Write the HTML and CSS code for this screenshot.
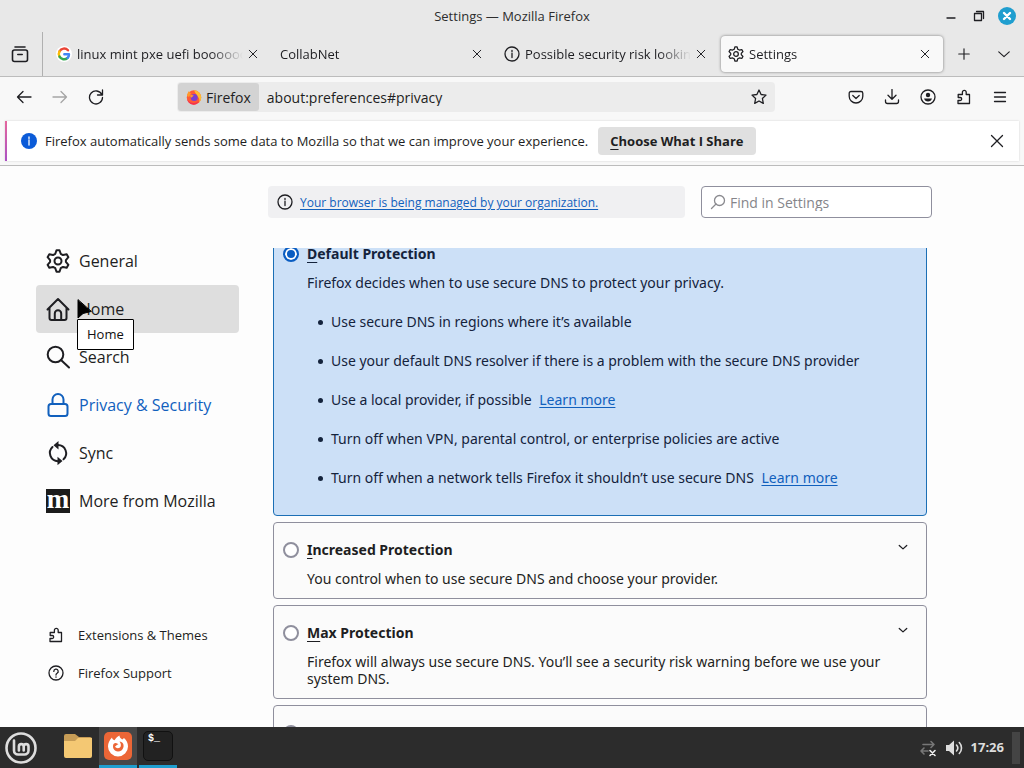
FILE: index.html
```
<!DOCTYPE html>
<html lang="en">
<head>
<meta charset="UTF-8">
<title>Settings</title>
<link rel="stylesheet" href="styles.css">
</head>
<body>
<!-- shared icons -->
<svg width="0" height="0" class="defs" aria-hidden="true">
	<symbol id="i-close" viewBox="0 0 16 16"><path d="M3 3l10 10M13 3L3 13"/></symbol>
	<symbol id="i-info" viewBox="0 0 16 16"><circle cx="8" cy="8" r="7"/><path d="M8 7.2v4.3M8 4.3v1.3"/></symbol>
	<symbol id="i-down" viewBox="0 0 16 16"><path d="M2 5.5l6 5.500 6-5.500"/></symbol>
	<symbol id="i-gear" viewBox="0 0 24 24"><path d="M10.500 1.200h3l1.200 3.600 2.300 1.300 3.700-.8 1.700 2.900-2.500 2.900v1.800l2.500 2.900-1.700 2.900-3.700-.8-2.300 1.300-1.200 3.600h-3l-1.200-3.600L7 17.900l-3.700.8-1.700-2.900 2.500-2.900v-1.800L1.600 8.200l1.700-2.900 3.700.8 2.300-1.300z"/><circle cx="12" cy="12" r="3.500"/></symbol>
	<symbol id="i-puzzle" viewBox="0 0 16 16"><path d="M2 14.500h11.500v-9H10.200V3.200a1.900 1.900 0 0 0-3.800 0v2.300H2.200v3h2a1.400 1.400 0 0 1 0 3H2z"/></symbol>
</svg>

<header class="titlebar">
	<h1>Settings — Mozilla Firefox</h1>
	<div class="winbtns">
		<button aria-label="Minimize"><svg viewBox="0 0 16 16"><path d="M4 10h8"/></svg></button>
		<button aria-label="Restore"><svg viewBox="0 0 16 16"><path d="M3.500 5.500h7v7h-7zM5.500 3.500h7v7"/></svg></button>
		<button aria-label="Close" class="win-close"><svg viewBox="0 0 16 16"><path d="M5 5l6 6M11 5l-6 6"/></svg></button>
	</div>
</header>

<div class="tabstrip">
	<button class="view" aria-label="Firefox View"><svg viewBox="0 0 18 18"><rect x="1.500" y="5" width="15" height="11.500" rx="2"/><path d="M4 2h10M6.800 9.500h4.400"/></svg></button>
	<div class="tabs">
		<div class="tab">
			<svg class="fav" viewBox="0 0 16 16"><circle cx="8" cy="8" r="8" fill="#fff" stroke="none"/><g fill="none" stroke-width="2.400"><path d="M12 4.300A5.200 5.200 0 0 0 3.500 5.400" stroke="#ea4335"/><path d="M3.500 5.400a5.200 5.200 0 0 0 0 5.200" stroke="#fbbc05"/><path d="M3.500 10.600a5.200 5.200 0 0 0 8 1.400" stroke="#34a853"/><path d="M11.500 12A5 5 0 0 0 13 8.200H8.300" stroke="#4285f4"/></g></svg>
			<span class="tab-label">linux mint pxe uefi booooooot</span>
			<button aria-label="Close tab"><svg viewBox="0 0 16 16"><use href="#i-close"/></svg></button>
		</div>
		<div class="tab">
			<span class="tab-label">CollabNet</span>
			<button aria-label="Close tab"><svg viewBox="0 0 16 16"><use href="#i-close"/></svg></button>
		</div>
		<div class="tab">
			<svg class="fav" viewBox="0 0 16 16"><use href="#i-info"/></svg>
			<span class="tab-label">Possible security risk looking up</span>
			<button aria-label="Close tab"><svg viewBox="0 0 16 16"><use href="#i-close"/></svg></button>
		</div>
		<div class="tab active">
			<svg class="fav gear" viewBox="0 0 24 24"><use href="#i-gear"/></svg>
			<span class="tab-label">Settings</span>
			<button aria-label="Close tab"><svg viewBox="0 0 16 16"><use href="#i-close"/></svg></button>
		</div>
	</div>
	<button class="strip-btn" aria-label="New tab"><svg viewBox="0 0 16 16"><path d="M8 2v12M2 8h12"/></svg></button>
	<button class="strip-btn" aria-label="List all tabs"><svg viewBox="0 0 16 16"><use href="#i-down"/></svg></button>
</div>

<div class="navbar">
	<button aria-label="Back"><svg viewBox="0 0 16 16"><path d="M15 8H1.500M7 2.500L1.500 8 7 13.500"/></svg></button>
	<button aria-label="Forward" disabled><svg viewBox="0 0 16 16"><path d="M1 8h13.500M9 2.500L14.500 8 9 13.500"/></svg></button>
	<button aria-label="Reload"><svg viewBox="0 0 16 16"><path d="M13.800 5.500A6.500 6.500 0 1 0 14.500 8.500M14.500 1v5H9.500"/></svg></button>
	<div class="urlbar">
		<button class="identity">
			<svg viewBox="0 0 16 16"><circle cx="8" cy="8.500" r="7.200" fill="#ff5a36"/><path d="M8 1.300c4 .5 7.200 3.200 7.200 7.200 0 2-1 4-2.200 5.200 1-3 0-5.200-1.500-6.200C10.500 5 9 4 8 1.300z" fill="#ffbd2e"/><path d="M1 7c0-2 1-4 2-5 .3 1.300 1 2 2 2.200L3 8z" fill="#ff9a2b"/><circle cx="8.200" cy="8.600" r="3.500" fill="#7a3fd0"/><path d="M4 6.500c1.500-1 3-.5 4 .3-1.500.3-1.500 1.500-3 2z" fill="#ff9a2b"/><path d="M1 10c2 4 8 5.500 12 2-1 3-4 3.800-5.500 3.700C4.500 15.600 1.500 13.500 1 10z" fill="#f5314d"/></svg>
			Firefox
		</button>
		<input type="text" value="about:preferences#privacy" aria-label="Address">
		<button class="star" aria-label="Bookmark this page"><svg viewBox="0 0 16 16"><path d="M8 1l2.100 4.500 4.900.6-3.600 3.400.9 4.900L8 12l-4.300 2.400.9-4.900L1 6.100l4.900-.6z"/></svg></button>
	</div>
	<button aria-label="Save to Pocket"><svg viewBox="0 0 16 16"><path d="M3 2.500h10a1.800 1.800 0 0 1 1.800 1.800v2.900a6.800 6.800 0 0 1-13.600 0V4.300A1.800 1.800 0 0 1 3 2.500zM4.800 6.500L8 9.500l3.200-3"/></svg></button>
	<button aria-label="Downloads"><svg viewBox="0 0 16 16"><path d="M8 .5V10M4 6.300L8 10.300l4-4M1.500 11v1.500a2 2 0 0 0 2 2h9a2 2 0 0 0 2-2V11"/></svg></button>
	<button aria-label="Account"><svg viewBox="0 0 16 16"><circle cx="8" cy="8" r="7"/><circle class="solid" cx="8" cy="6" r="2.200"/><path class="solid" d="M4 9.500h8a4.200 4.200 0 0 1-8 0z"/></svg></button>
	<button aria-label="Extensions"><svg viewBox="0 0 16 16"><use href="#i-puzzle"/></svg></button>
	<button aria-label="Menu"><svg viewBox="0 0 16 16"><path d="M2.500 3.500h11M2.500 8h11M2.500 12.500h11"/></svg></button>
</div>

<div class="notice-wrap">
	<div class="notice">
		<svg class="notice-icon" viewBox="0 0 16 16"><circle cx="8" cy="8" r="8"/><path d="M8 7v5M8 4v1.500"/></svg>
		<span>Firefox automatically sends some data to Mozilla so that we can improve your experience.</span>
		<button class="choose"><u>C</u>hoose What I Share</button>
		<button class="dismiss" aria-label="Dismiss"><svg viewBox="0 0 16 16"><path d="M2.500 2.500l11 11M13.500 2.500l-11 11"/></svg></button>
	</div>
</div>

<div class="prefs">
	<aside class="sidebar">
		<nav class="cats">
			<a href="#general"><svg viewBox="0 0 24 24"><use href="#i-gear"/></svg>General</a>
			<a href="#home" class="hover"><svg viewBox="0 0 24 24"><path d="M1.500 12.500L12 2l10.500 10.500M3.500 10.500V21a2 2 0 0 0 2 2h13a2 2 0 0 0 2-2V10.500M8.800 23v-6.500a3.200 3.200 0 0 1 6.400 0V23"/></svg>Home
				<svg class="cursor" viewBox="0 0 15 20"><path d="M1 1v18l5-4.500 8-2z"/></svg>
				<span class="tooltip">Home</span>
			</a>
			<a href="#search"><svg viewBox="0 0 24 24"><circle cx="9.500" cy="9.500" r="7.800"/><path d="M15 15l8 7.500"/></svg>Search</a>
			<a href="#privacy" class="selected"><svg viewBox="0 0 24 24"><rect x="2.500" y="11" width="19" height="12" rx="2.500"/><path d="M6.500 11V6.500a5.500 5.500 0 0 1 11 0V11"/></svg>Privacy &amp; Security</a>
			<a href="#sync"><svg viewBox="0 0 24 24"><path d="M12 4a8.200 8.200 0 0 1 5.500 14.200M12 20.200A8.200 8.200 0 0 1 6.500 6"/><path class="solid" d="M12.500 0v8.500L7.500 4.200zM11.500 15.700v8.500l5-4.300z"/></svg>Sync</a>
			<a href="#more"><span class="moz">m</span>More from Mozilla</a>
		</nav>
		<nav class="extra">
			<a href="#addons"><svg viewBox="0 0 16 16"><use href="#i-puzzle"/></svg>Extensions &amp; Themes</a>
			<a href="#support"><svg viewBox="0 0 16 16"><circle cx="8" cy="8" r="7"/><path d="M5.800 6.400a2.200 2.200 0 1 1 3.300 1.900Q8 9 8 10M8 11.800v.4"/></svg>Firefox Support</a>
		</nav>
	</aside>

	<main class="content">
		<div class="top-row">
			<div class="managed">
				<svg viewBox="0 0 16 16"><use href="#i-info"/></svg>
				<a href="#policies">Your browser is being managed by your organization.</a>
			</div>
			<label class="find">
				<svg viewBox="0 0 16 16"><circle cx="9.500" cy="6.500" r="5"/><path d="M6 10l-4.500 4.500"/></svg>
				<input type="text" placeholder="Find in Settings" aria-label="Find in Settings">
			</label>
		</div>

		<div class="pane">
			<section class="card checked">
				<input type="radio" name="doh" id="doh-default" checked>
				<div class="card-body">
					<label for="doh-default"><u>D</u>efault Protection</label>
					<p>Firefox decides when to use secure DNS to protect your privacy.</p>
					<ul>
						<li>Use secure DNS in regions where it’s available</li>
						<li>Use your default DNS resolver if there is a problem with the secure DNS provider</li>
						<li>Use a local provider, if possible <a href="#learn-local">Learn more</a></li>
						<li>Turn off when VPN, parental control, or enterprise policies are active</li>
						<li>Turn off when a network tells Firefox it shouldn’t use secure DNS <a href="#learn-network">Learn more</a></li>
					</ul>
				</div>
			</section>
			<section class="card">
				<input type="radio" name="doh" id="doh-increased">
				<div class="card-body">
					<label for="doh-increased"><u>I</u>ncreased Protection</label>
					<p>You control when to use secure DNS and choose your provider.</p>
				</div>
				<button class="expand" aria-label="Show details"><svg viewBox="0 0 16 16"><use href="#i-down"/></svg></button>
			</section>
			<section class="card">
				<input type="radio" name="doh" id="doh-max">
				<div class="card-body">
					<label for="doh-max"><u>M</u>ax Protection</label>
					<p>Firefox will always use secure DNS. You’ll see a security risk warning before we use your system DNS.</p>
				</div>
				<button class="expand" aria-label="Show details"><svg viewBox="0 0 16 16"><use href="#i-down"/></svg></button>
			</section>
			<section class="card">
				<input type="radio" name="doh" id="doh-off">
				<div class="card-body">
					<label for="doh-off"><u>O</u>ff</label>
				</div>
			</section>
		</div>
	</main>
</div>

<footer class="panel">
	<button class="mint" aria-label="Menu"><svg viewBox="0 0 32 32"><circle cx="16" cy="16" r="14.500"/><path d="M9 8.500v10a4 4 0 0 0 4 4h6.500a4 4 0 0 0 4-4v-4a2.400 2.400 0 0 0-4.800 0v4M18.700 14.500a2.400 2.400 0 0 0-4.800 0v4"/></svg></button>
	<button class="launch" aria-label="Files"><svg viewBox="0 0 28 28"><path d="M0 4a2 2 0 0 1 2-2h9l4 3h11a2 2 0 0 1 2 2v6H0z" fill="#c69c56"/><path d="M0 9h11l3-3h14v18a2 2 0 0 1-2 2H2a2 2 0 0 1-2-2z" fill="#f4c873"/></svg></button>
	<button class="launch running current" aria-label="Firefox"><svg viewBox="0 0 28 28"><rect width="28" height="28" rx="5" fill="#ec6636"/><path d="M8 5.500c.2 1.500 1 2.300 2.500 2.700C12 6 13 5 15.500 3.500c0 2 1 2.700 2.800 4L20 6c2.500 2 4 5 4 8.500a10 10 0 0 1-20 0C4 11 5.500 8 8 5.500z" fill="#fff"/><path d="M9.500 12c2-2 4-.5 5 .3-2 .4-2 1.700-3.500 2.200 1 2 3.500 2 5 1 1.500-1.500 1-4-.5-6C19 10 20 12.500 19.500 15c-.7 3-3 4.500-5.500 4.500-4 0-6-4-4.500-7.500z" fill="#ec6636"/></svg></button>
	<button class="launch running" aria-label="Terminal"><span class="term">$_</span></button>
	<div class="tray">
		<svg class="net" viewBox="0 0 18 18"><g stroke="#777"><path d="M4 5.500h11M12 2.500l3 3-3 3M9 12H2M5 9l-3 3 3 3"/></g><path stroke="#eee" d="M11 11.500l5 5M16 11.500l-5 5"/></svg>
		<svg class="vol" viewBox="0 0 18 18"><path class="solid" d="M1 6h3l5-4.500v15L4 12H1z"/><path d="M11.500 6a4.500 4.500 0 0 1 0 6M14.300 3.500a8 8 0 0 1 0 11"/></svg>
		<time>17:26</time>
		<span class="desk"></span>
	</div>
</footer>
</body>
</html>
```
FILE: styles.css
```
*{
	box-sizing:border-box;
}
body{
	margin:0;
	height:100vh;
	display:flex;
	flex-direction:column;
	overflow:hidden;
	background:#fdfdfd;
	color:#1e1e22;
	font-family:"Open Sans", "Noto Sans", sans-serif;
	font-size:13px;
	line-height:17px;
}
button{
	display:flex;
	align-items:center;
	justify-content:center;
	padding:0;
	border:0;
	background:none;
	color:inherit;
	font:inherit;
}
input{
	font:inherit;
	color:inherit;
}
svg{
	width:16px;
	height:16px;
	flex:none;
	fill:none;
	stroke:currentColor;
	stroke-width:1.3;
	stroke-linejoin:round;
	stroke-linecap:round;
}
.solid{
	fill:currentColor;
	stroke:none;
}
.defs{
	position:absolute;
	width:0;
	height:0;
}
u{
	text-underline-offset:3px;
}

/* window title */
.titlebar{
	display:flex;
	align-items:center;
	flex:none;
	height:32px;
	padding:0 8px 0 82px;
	background:#e8e8e8;
}
.titlebar h1{
	flex:1;
	margin:0;
	text-align:center;
	font-size:13px;
	font-weight:500;
	color:#2d2d2d;
}
.winbtns{
	display:flex;
	gap:10px;
}
.winbtns button{
	width:18px;
	height:18px;
}
.win-close{
	border-radius:50%;
}
.winbtns .win-close{
	background:#1f9ecf;
	color:#fff;
}
.win-close svg{
	stroke-width:2.4;
}

/* tabs */
.tabstrip{
	display:flex;
	align-items:center;
	flex:none;
	height:45px;
	background:#e8e8e8;
	border-bottom:1px solid #bcbcbc;
}
.view{
	width:43px;
	height:44px;
	padding-right:2px;
	border-right:1px solid #b0b0b0;
}
.view svg{
	width:18px;
	height:18px;
	stroke-width:1.6;
}
.tabs{
	flex:1;
	display:flex;
	min-width:0;
	padding-left:5px;
}
.tab{
	flex:1;
	min-width:0;
	display:flex;
	align-items:center;
	height:36px;
	margin:0 1px;
	padding:0 8px 0 7px;
	border-radius:4px;
}
.tab.active{
	background:#f9f9f9;
	box-shadow:0 0 3px rgba(0,0,0,.5);
}
.fav{
	margin-right:5px;
}
.gear{
	stroke-width:1.9;
}
.tab-label{
	flex:1;
	min-width:0;
	overflow:hidden;
	white-space:nowrap;
	-webkit-mask-image:linear-gradient(to left, transparent, #000 32px);
	mask-image:linear-gradient(to left, transparent, #000 32px);
}
.tab button{
	width:20px;
	height:20px;
}
.tab button svg{
	width:12px;
	height:12px;
}
.strip-btn{
	width:40px;
	height:36px;
}
.strip-btn svg{
	width:14px;
	height:14px;
}

/* toolbar */
.navbar{
	display:flex;
	align-items:center;
	flex:none;
	height:41px;
	padding:0 6px 1px;
	background:#f8f8f8;
}
.navbar > button{
	width:36px;
	height:32px;
}
.navbar button:disabled{
	color:#a5a5a5;
}
.urlbar{
	flex:1;
	display:flex;
	align-items:center;
	min-width:0;
	height:30px;
	margin:0 63px;
	padding:1px;
	border-radius:4px;
	background:#ececec;
	font-size:14px;
}
.identity{
	gap:4px;
	height:28px;
	padding:0 8px;
	border-radius:3px;
	background:#d3d3d3;
}
.identity svg{
	stroke:none;
}
.urlbar input{
	flex:1;
	min-width:0;
	padding:0 8px;
	border:0;
	background:none;
	outline:0;
}
.star{
	width:30px;
	height:28px;
}

/* notification */
.notice-wrap{
	flex:none;
	padding:3px 5px 4px;
	background:#f8f8f8;
	border-bottom:1px solid #bcbcbc;
}
.notice{
	display:flex;
	align-items:center;
	height:40px;
	padding:0 14px;
	border-left:2px solid #c65fb0;
	border-image:linear-gradient(#e6679c, #a950c4) 1;
	background:#fff;
	box-shadow:0 0 2px rgba(0,0,0,.15);
}
.notice-icon{
	margin-right:8px;
	fill:#0b5bd8;
	stroke:none;
}
.notice-icon path{
	stroke:#fff;
}
.choose{
	height:28px;
	margin-left:10px;
	padding:0 12px;
	border-radius:4px;
	background:#e0e0e0;
	font-weight:700;
	white-space:pre;
}
.dismiss{
	margin-left:auto;
}

/* settings page */
.prefs{
	flex:1;
	min-height:0;
	display:flex;
}
.sidebar{
	flex:none;
	width:268px;
	display:flex;
	flex-direction:column;
	justify-content:space-between;
	padding:71px 29px 35px 36px;
}
.sidebar a{
	display:flex;
	align-items:center;
	color:inherit;
	text-decoration:none;
}
.cats a{
	position:relative;
	height:48px;
	padding-left:10px;
	gap:9px;
	border-radius:4px;
	font-size:16px;
}
.cats a > svg{
	width:24px;
	height:24px;
	stroke-width:2;
}
.cats .hover{
	background:#dedede;
}
.cats .selected{
	color:#1160bd;
}
.moz{
	width:24px;
	height:24px;
	background:#1c1c1c;
	color:#fff;
	font:700 27px/20px "Liberation Serif", serif;
	text-align:center;
}
.cats a > .cursor{
	position:absolute;
	left:41px;
	top:14px;
	width:15px;
	height:20px;
	z-index:2;
	fill:#000;
	stroke:#000;
	stroke-width:1;
}
.tooltip{
	position:absolute;
	left:41px;
	top:34px;
	z-index:1;
	padding:6px 9px;
	border:1px solid #000;
	border-radius:1px;
	background:#fff;
	color:#111;
	font-size:13px;
}
.extra a{
	height:38px;
	padding-left:12px;
	gap:14px;
}
.content{
	flex:1;
	min-width:0;
	max-width:664px;
	display:flex;
	flex-direction:column;
	padding-top:20px;
}
.top-row{
	display:flex;
	gap:16px;
	flex:none;
	height:32px;
	margin-bottom:30px;
}
.managed{
	flex:1;
	display:flex;
	align-items:center;
	gap:7px;
	padding:0 9px;
	border-radius:4px;
	background:#f0f0f2;
	font-size:12px;
}
.content a{
	color:#1160bd;
	text-underline-offset:2px;
}
.find{
	display:flex;
	align-items:center;
	width:231px;
	padding:0 8px;
	gap:4px;
	border:1px solid #8f8f9d;
	border-radius:4px;
	background:#fff;
	color:#8a8a8f;
	font-size:14px;
}
.find input{
	flex:1;
	min-width:0;
	padding:0;
	border:0;
	outline:0;
	background:none;
}
.find input::placeholder{
	color:#85858a;
}
.pane{
	flex:1;
	min-height:0;
	display:flex;
	flex-direction:column;
	gap:6px;
	padding:0 5px;
	overflow:hidden;
	font-family:"Noto Sans", "Open Sans", sans-serif;
	font-size:14px;
}
.card{
	flex:none;
	display:flex;
	align-items:flex-start;
	padding:18px 15px 11px 9px;
	border:1px solid #8f8f9d;
	border-radius:4px;
	background:#fbfbfb;
}
/* scrolled partly under the search row */
.card.checked{
	margin-top:-22px;
	border-color:#1c6fb5;
	background:#cce0f7;
	color:#14233c;
}
.card input{
	appearance:none;
	flex:none;
	width:16px;
	height:16px;
	margin:1px 8px 0 0;
	border:2px solid #8f8f9d;
	border-radius:50%;
	background:#fff;
}
.card input:checked{
	border-color:#0a5dc2;
	background:#0a5dc2;
	box-shadow:inset 0 0 0 2px #fff;
}
.card-body{
	flex:1;
	min-width:0;
}
.card label{
	display:block;
	font-weight:700;
}
.card p{
	margin:12px 0 0;
}
.card ul{
	margin:22px 0 18px;
	padding-left:24px;
	list-style:none;
}
.card li::before{
	content:"";
	display:inline-block;
	width:5px;
	height:5px;
	margin:0 8px 2px -13px;
	border-radius:50%;
	background:currentColor;
}
.card li + li{
	margin-top:22px;
}
.card li a{
	margin-left:4px;
}
.expand{
	width:16px;
	height:12px;
}
.expand svg{
	width:10px;
	height:10px;
	stroke-width:2;
}

/* desktop panel */
.panel{
	flex:none;
	display:flex;
	align-items:center;
	height:41px;
	background:#2c2c2c;
	color:#ddd;
}
.mint{
	width:42px;
	margin-right:17px;
}
.mint svg{
	width:32px;
	height:32px;
	stroke-width:2.6;
}
.launch{
	width:38px;
	height:41px;
	margin-right:2px;
	border-bottom:3px solid transparent;
}
.launch svg{
	width:28px;
	height:28px;
	stroke:none;
}
.current{
	background:#474747;
}
.running{
	border-bottom-color:#1f9ecf;
}
.term{
	width:30px;
	height:30px;
	padding:1px 4px;
	border:1px solid #111;
	border-radius:5px;
	background:#222;
	color:#fff;
	font:700 10px/12px "Liberation Mono", monospace;
	text-align:left;
}
.tray{
	display:flex;
	align-items:center;
	margin-left:auto;
	padding-right:4px;
}
.tray svg{
	width:18px;
	height:18px;
	margin-right:8px;
	stroke-width:1.6;
}
.tray time{
	font-weight:700;
}
.desk{
	width:8px;
	height:32px;
	margin-left:8px;
	background:#444;
}
```
